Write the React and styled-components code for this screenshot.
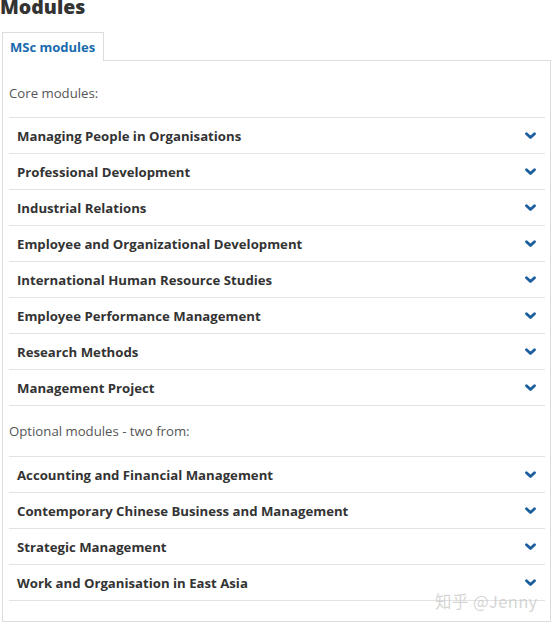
import React from "react";
import styled, { createGlobalStyle } from "styled-components";

const Global = createGlobalStyle`
  html, body { margin: 0; padding: 0; background: #fff; }
  body { font-family: "Open Sans", "Noto Sans", sans-serif; color: #333; overflow: hidden; }
`;

const Page = styled.div`
  position: relative;
  width: 553px;
  height: 624px;
  overflow: hidden;
`;

const Title = styled.h2`
  margin: -6px 0 0 0;
  font-size: 19.5px;
  line-height: 26px;
  font-weight: 800;
  color: #333;
`;

const Tabs = styled.div`
  display: flex;
  margin: 12px 0 0 2px;
`;

const Tab = styled.div`
  height: 28px;
  padding: 0 8px 0 7px;
  display: flex;
  align-items: center;
  border: 1px solid #ddd;
  border-bottom: none;
  background: #fff;
  color: #1a6aad;
  font-weight: 700;
  font-size: 13px;
  margin-bottom: -1px;
  position: relative;
  z-index: 1;
`;

const Panel = styled.div`
  margin-left: 2px;
  width: 549px;
  border: 1px solid #ddd;
  padding: 7px 5px 20px 6px;
  box-sizing: border-box;
`;

const SectionLabel = styled.div`
  font-size: 13.2px;
  line-height: 20px;
  color: #555;
  padding: ${p => (p.$first ? "15px 0 14px" : "15px 0 15px")};
`;

const List = styled.div`
  border-bottom: 1px solid #e3e3e3;
`;

const Row = styled.div`
  display: flex;
  align-items: center;
  justify-content: space-between;
  height: 35px;
  border-top: 1px solid #e3e3e3;
  padding: 0 9px 0 8px;
  font-size: 13.2px;
  font-weight: 700;
  color: #333;
`;

const ChevronSvg = styled.svg`
  width: 11px;
  height: 8px;
  display: block;
`;

const Chevron = () => (
  <ChevronSvg viewBox="0 0 11 8">
    <polyline
      points="1.5,1.8 5.5,5.6 9.5,1.8"
      fill="none"
      stroke="#1d5f9e"
      strokeWidth="2.8"
      strokeLinecap="round"
      strokeLinejoin="round"
    />
  </ChevronSvg>
);

const Watermark = styled.div`
  position: absolute;
  left: 435px;
  top: 589px;
  font-family: "Noto Sans CJK SC", "Noto Sans", sans-serif;
  font-size: 16.5px;
  color: rgba(200, 200, 200, 0.75);
  letter-spacing: 0.4px;
`;

const core = [
  "Managing People in Organisations",
  "Professional Development",
  "Industrial Relations",
  "Employee and Organizational Development",
  "International Human Resource Studies",
  "Employee Performance Management",
  "Research Methods",
  "Management Project",
];

const optional = [
  "Accounting and Financial Management",
  "Contemporary Chinese Business and Management",
  "Strategic Management",
  "Work and Organisation in East Asia",
];

export default function App() {
  return (
    <Page>
      <Global />
      <Title>Modules</Title>
      <Tabs>
        <Tab>MSc modules</Tab>
      </Tabs>
      <Panel>
        <SectionLabel $first>Core modules:</SectionLabel>
        <List>
          {core.map(t => (
            <Row key={t}>
              <span>{t}</span>
              <Chevron />
            </Row>
          ))}
        </List>
        <SectionLabel>Optional modules - two from:</SectionLabel>
        <List>
          {optional.map(t => (
            <Row key={t}>
              <span>{t}</span>
              <Chevron />
            </Row>
          ))}
        </List>
      </Panel>
      <Watermark>知乎 @Jenny</Watermark>
    </Page>
  );
}
